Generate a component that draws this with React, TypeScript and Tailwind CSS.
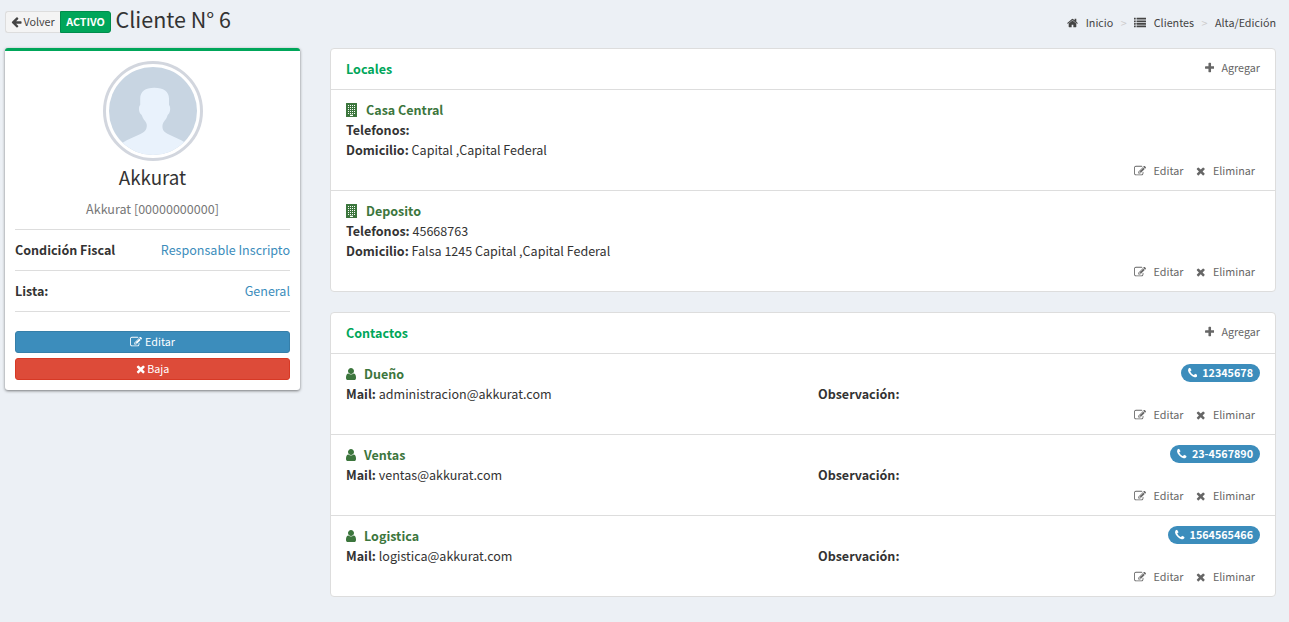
import React from 'react';

type IconName = 'edit' | 'times' | 'plus' | 'back' | 'home' | 'list' | 'phone' | 'user' | 'building';

const WINDOW_ROWS = [256, 512, 768, 1024, 1280];
const WINDOW_COLS = [256, 512, 768, 1024];

const GLYPHS: Record<IconName, { x: number; w: number; body: React.ReactNode }> = {
  edit: {
    x: 0,
    w: 1792,
    body: (
      <path d="M888 1184l116-116-152-152-116 116v56h96v96h56zm440-720q-16-16-33 1l-350 350q-17 17-1 33t33-1l350-350q17-17 1-33zm80 594v190q0 119-84.500 203.500t-203.500 84.500h-832q-119 0-203.500-84.500t-84.500-203.500v-832q0-119 84.500-203.500t203.500-84.500h832q63 0 117 25 15 7 18 23 3 17-9 29l-49 49q-14 14-32 8-23-6-45-6h-832q-66 0-113 47t-47 113v832q0 66 47 113t113 47h832q66 0 113-47t47-113v-126q0-13 9-22l64-64q15-15 35-7t20 29zm-96-738l288 288-672 672h-288v-288zm444 132l-92 92-288-288 92-92q28-28 68-28t68 28l152 152q28 28 28 68t-28 68z" />
    ),
  },
  times: {
    x: 192,
    w: 1408,
    body: (
      <path d="M1490 1322q0 40-28 68l-136 136q-28 28-68 28t-68-28l-294-294-294 294q-28 28-68 28t-68-28l-136-136q-28-28-28-68t28-68l294-294-294-294q-28-28-28-68t28-68l136-136q28-28 68-28t68 28l294 294 294-294q28-28 68-28t68 28l136 136q28 28 28 68t-28 68l-294 294 294 294q28 28 28 68z" />
    ),
  },
  plus: {
    x: 192,
    w: 1408,
    body: (
      <path d="M1600 736v192q0 40-28 68t-68 28h-416v416q0 40-28 68t-68 28h-192q-40 0-68-28t-28-68v-416h-416q-40 0-68-28t-28-68v-192q0-40 28-68t68-28h416v-416q0-40 28-68t68-28h192q40 0 68 28t28 68v416h416q40 0 68 28t28 68z" />
    ),
  },
  back: {
    x: 64,
    w: 1664,
    body: (
      <path d="M1664 896v128q0 53-32.500 90.500t-84.500 37.500h-704l293 294q38 36 38 90t-38 90l-75 76q-37 37-90 37-52 0-91-37l-651-652q-37-37-37-90 0-52 37-91l651-650q38-38 91-38 52 0 90 38l75 74q38 38 38 91t-38 91l-293 293h704q52 0 84.500 37.500t32.500 90.500z" />
    ),
  },
  home: {
    x: 64,
    w: 1664,
    body: (
      <path d="M1472 992v480q0 26-19 45t-45 19h-384v-384h-256v384h-384q-26 0-45-19t-19-45v-480q0-1 .5-3t.5-3l575-474 575 474q1 2 1 6zm223-69l-62 74q-8 9-21 11h-3q-13 0-21-7l-692-577-692 577q-12 8-24 7-13-2-21-11l-62-74q-8-10-7-23.500t11-21.500l719-599q32-26 76-26t76 26l244 204v-195q0-14 9-23t23-9h192q14 0 23 9t9 23v408l219 182q10 8 11 21.500t-7 23.500z" />
    ),
  },
  list: {
    x: 0,
    w: 1792,
    body: (
      <>
        {[256, 640, 1024, 1408].map((y) => (
          <g key={y}>
            <rect x="0" y={y - 128} width="256" height="256" rx="32" />
            <rect x="384" y={y - 128} width="1408" height="256" rx="32" />
          </g>
        ))}
      </>
    ),
  },
  phone: {
    x: 192,
    w: 1408,
    body: (
      <path d="M1600 1240q0 27-10 70.500t-21 68.500q-21 50-122 106-94 51-186 51-27 0-52.500-3.500t-57.500-12.500-47.500-14.500-55.500-20.500-49-18q-98-35-175-83-128-79-264.500-215.500t-215.500-264.500q-48-77-83-175-3-9-18-49t-20.500-55.500-14.500-47.500-12.500-57.500-3.500-52.500q0-92 51-186 56-101 106-122 25-11 68.500-21t70.500-10q14 0 21 3 18 6 53 76 11 19 30 54t35 63.500 31 53.500q3 4 17.500 25t21.500 35.500 7 28.500q0 20-28.500 50t-62 55-62 53-28.500 46q0 9 5 22.500t8.500 20.500 14 24 11.500 19q76 137 174 235t235 174q2 1 19 11.500t24 14 20.500 8.500 22.500 5q18 0 46-28.500t53-62 55-62 50-28.500q14 0 28.500 7t35.500 21.500 25 17.500q25 15 53.500 31t63.500 35 54 30q70 35 76 53 3 7 3 21z" />
    ),
  },
  user: {
    x: 256,
    w: 1280,
    body: (
      <path d="M1536 1399q0 109-62.500 187t-150.500 78h-854q-88 0-150.500-78t-62.500-187q0-85 8.500-160.500t31.500-152 58.500-131 94-89 134.500-34.500q131 128 313 128t313-128q76 0 134.500 34.500t94 89 58.500 131 31.500 152 8.500 160.500zm-256-887q0 159-112.500 271.500t-271.500 112.500-271.500-112.500-112.500-271.500 112.500-271.500 271.500-112.500 271.500 112.500 112.500 271.500z" />
    ),
  },
  building: {
    x: 0,
    w: 1408,
    body: (
      <>
        <rect x="0" y="0" width="1408" height="1792" rx="40" />
        <g fill="#fff">
          {WINDOW_ROWS.map((y) =>
            WINDOW_COLS.map((x) => <rect key={`${x}-${y}`} x={x} y={y} width="128" height="128" rx="16" />),
          )}
          <rect x="512" y="1510" width="384" height="154" rx="16" />
        </g>
      </>
    ),
  },
};

function Icon({ name, className }: { name: IconName; className: string }) {
  const g = GLYPHS[name];
  return (
    <svg viewBox={`${g.x} 0 ${g.w} 1792`} fill="currentColor" className={`inline-block shrink-0 ${className}`}>
      {g.body}
    </svg>
  );
}

function Actions() {
  return (
    <div className="flex h-[22px] items-center justify-end pr-[5px] text-[10.75px] leading-[18px] text-[#666]">
      <a className="flex items-center">
        <Icon name="edit" className="mr-[7.5px] h-3 w-3" />
        Editar
      </a>
      <a className="ml-[13px] flex items-center">
        <Icon name="times" className="mr-[7px] h-3 w-[9.5px]" />
        Eliminar
      </a>
    </div>
  );
}

function Panel({ title, children }: { title: string; children: React.ReactNode }) {
  return (
    <section className="rounded-[4px] border border-[#ddd] bg-white">
      <header className="flex h-10 items-center justify-between px-[15px]">
        <h2 className="font-bold text-[#00a65a]">{title}</h2>
        <a className="-mt-[3px] flex items-center text-[10.75px] leading-[18px] text-[#666]">
          <Icon name="plus" className="mr-[7px] h-3 w-[9.5px]" />
          Agregar
        </a>
      </header>
      {children}
    </section>
  );
}

function Local({ name, phone, address }: { name: string; phone: string; address: string }) {
  return (
    <article className="border-t border-[#ddd] px-[15px] pt-[10px] pb-2">
      <h3 className="flex items-center font-bold text-[#3c763d]">
        <Icon name="building" className="mr-[9px] h-[14px] w-[11px]" />
        {name}
      </h3>
      <p><b>Telefonos:</b> {phone}</p>
      <p><b>Domicilio:</b> {address}</p>
      <Actions />
    </article>
  );
}

function Contact({ name, mail, phone }: { name: string; mail: string; phone: string }) {
  return (
    <article className="border-t border-[#ddd] px-[15px] pt-[10px] pb-2">
      <div className="flex h-5 items-start justify-between">
        <h3 className="flex items-center font-bold text-[#3c763d]">
          <Icon name="user" className="mr-2 h-[14px] w-[10px]" />
          {name}
        </h3>
        <span className="flex h-[18px] items-center rounded-[10px] bg-[#3c8dbc] px-[7px] text-[10.75px] leading-[18px] font-bold text-white">
          <Icon name="phone" className="mr-[5px] h-3 w-[9.5px]" />
          {phone}
        </span>
      </div>
      <div className="flex">
        <p className="w-[472px]"><b>Mail:</b> {mail}</p>
        <p><b>Observación:</b></p>
      </div>
      <Actions />
    </article>
  );
}

function Avatar() {
  return (
    <div className="mx-auto h-[100px] w-[100px] rounded-full border-[3px] border-[#d2d6de] p-[3px]">
      <svg viewBox="0 0 88 88" className="h-[88px] w-[88px] rounded-full">
        <rect width="88" height="88" fill="#c8d5e2" />
        <path
          d="M45.300 20.700C54.500 20.700 60 24.500 60 31.500V38C61.800 39.500 61.500 45.500 59.300 47.300C58.800 47.700 58.400 48.700 58 50C57 53 54 54.500 53.500 58C53 63 55 65.500 61 68C66 70.300 71 72.300 76 75.500L80 88H10L14 75.500C19 72.300 24 70.300 29.300 68C35.500 65.500 38 63 37.800 58C37.500 54.500 34.500 53 33.500 50C33 48.700 32.600 47.700 32 47.300C29.600 45.500 29.300 39.500 31.200 38V31.500C31.200 24.500 36.200 20.700 45.300 20.700Z"
          fill="#e9f2fc"
        />
      </svg>
    </div>
  );
}

function Attribute({ label, value }: { label: string; value: string }) {
  return (
    <div className="flex h-[41px] items-center justify-between border-b border-[#ddd]">
      <b>{label}</b>
      <a className="text-[#3c8dbc]">{value}</a>
    </div>
  );
}

export default function App() {
  return (
    <div className="min-h-screen bg-[#ecf0f5] font-['Noto_Sans_CJK_JP','Noto_Sans_CJK_SC',sans-serif] text-[12.54px] leading-5 text-[#333]">
      <header className="flex h-12 justify-between pr-[13px] pl-[5px]">
        <div className="flex">
          <div className="mt-[11px] flex h-[22px] text-[10.75px] leading-5">
            <button className="flex w-[55px] items-center rounded-l-[3px] border border-r-0 border-[#ddd] bg-[#f4f4f4] pl-[5px] text-[#444]">
              <Icon name="back" className="mr-[1.5px] h-3 w-[11px]" />
              Volver
            </button>
            <button className="w-[51px] rounded-r-[3px] border border-[#008d4c] bg-[#00a65a] font-bold text-white">
              ACTIVO
            </button>
          </div>
          <h1 className="mt-[6px] ml-[4.5px] text-[21.5px] leading-[26px]">Cliente N° 6</h1>
        </div>
        <nav className="mt-[14px] flex h-[18px] items-center text-[10.75px] leading-[18px] text-[#444]">
          <Icon name="home" className="mr-[7.5px] h-3 w-[11px]" />
          Inicio
          <span className="mx-[7.5px] text-[#ccc]">&gt;</span>
          <Icon name="list" className="mr-[7.5px] h-3 w-3" />
          Clientes
          <span className="mx-[7.5px] text-[#ccc]">&gt;</span>
          Alta/Edición
        </nav>
      </header>

      <main className="flex items-start pr-[13px] pl-[5px]">
        <aside className="mr-[30px] h-[342px] w-[295px] shrink-0 rounded-[3px] border-t-[3px] border-[#00a65a] bg-white p-[10px] shadow-[0_1px_3px_rgba(0,0,0,0.5)]">
          <Avatar />
          <h2 className="mt-[4px] text-center text-[18.8px] leading-[23px]">Akkurat</h2>
          <p className="mt-[11px] text-center text-[#777]">Akkurat [00000000000]</p>
          <div className="mt-[10px] border-t border-[#ddd]">
            <Attribute label="Condición Fiscal" value="Responsable Inscripto" />
            <Attribute label="Lista:" value="General" />
          </div>
          <button className="mt-[19px] flex h-[22px] w-full items-center justify-center rounded-[3px] border border-[#367fa9] bg-[#3c8dbc] text-[10.75px] leading-[18px] text-white">
            <Icon name="edit" className="mr-[3px] h-3 w-3" />
            Editar
          </button>
          <button className="mt-[5px] flex h-[22px] w-full items-center justify-center rounded-[3px] border border-[#d73925] bg-[#dd4b39] text-[10.75px] leading-[18px] text-white">
            <Icon name="times" className="mr-[2px] h-3 w-[9.5px]" />
            Baja
          </button>
        </aside>

        <div className="flex grow flex-col gap-5">
          <Panel title="Locales">
            <Local name="Casa Central" phone="" address="Capital ,Capital Federal" />
            <Local name="Deposito" phone="45668763" address="Falsa 1245 Capital ,Capital Federal" />
          </Panel>
          <Panel title="Contactos">
            <Contact name="Dueño" mail="administracion@akkurat.com" phone="12345678" />
            <Contact name="Ventas" mail="ventas@akkurat.com" phone="23-4567890" />
            <Contact name="Logistica" mail="logistica@akkurat.com" phone="1564565466" />
          </Panel>
        </div>
      </main>
    </div>
  );
}
